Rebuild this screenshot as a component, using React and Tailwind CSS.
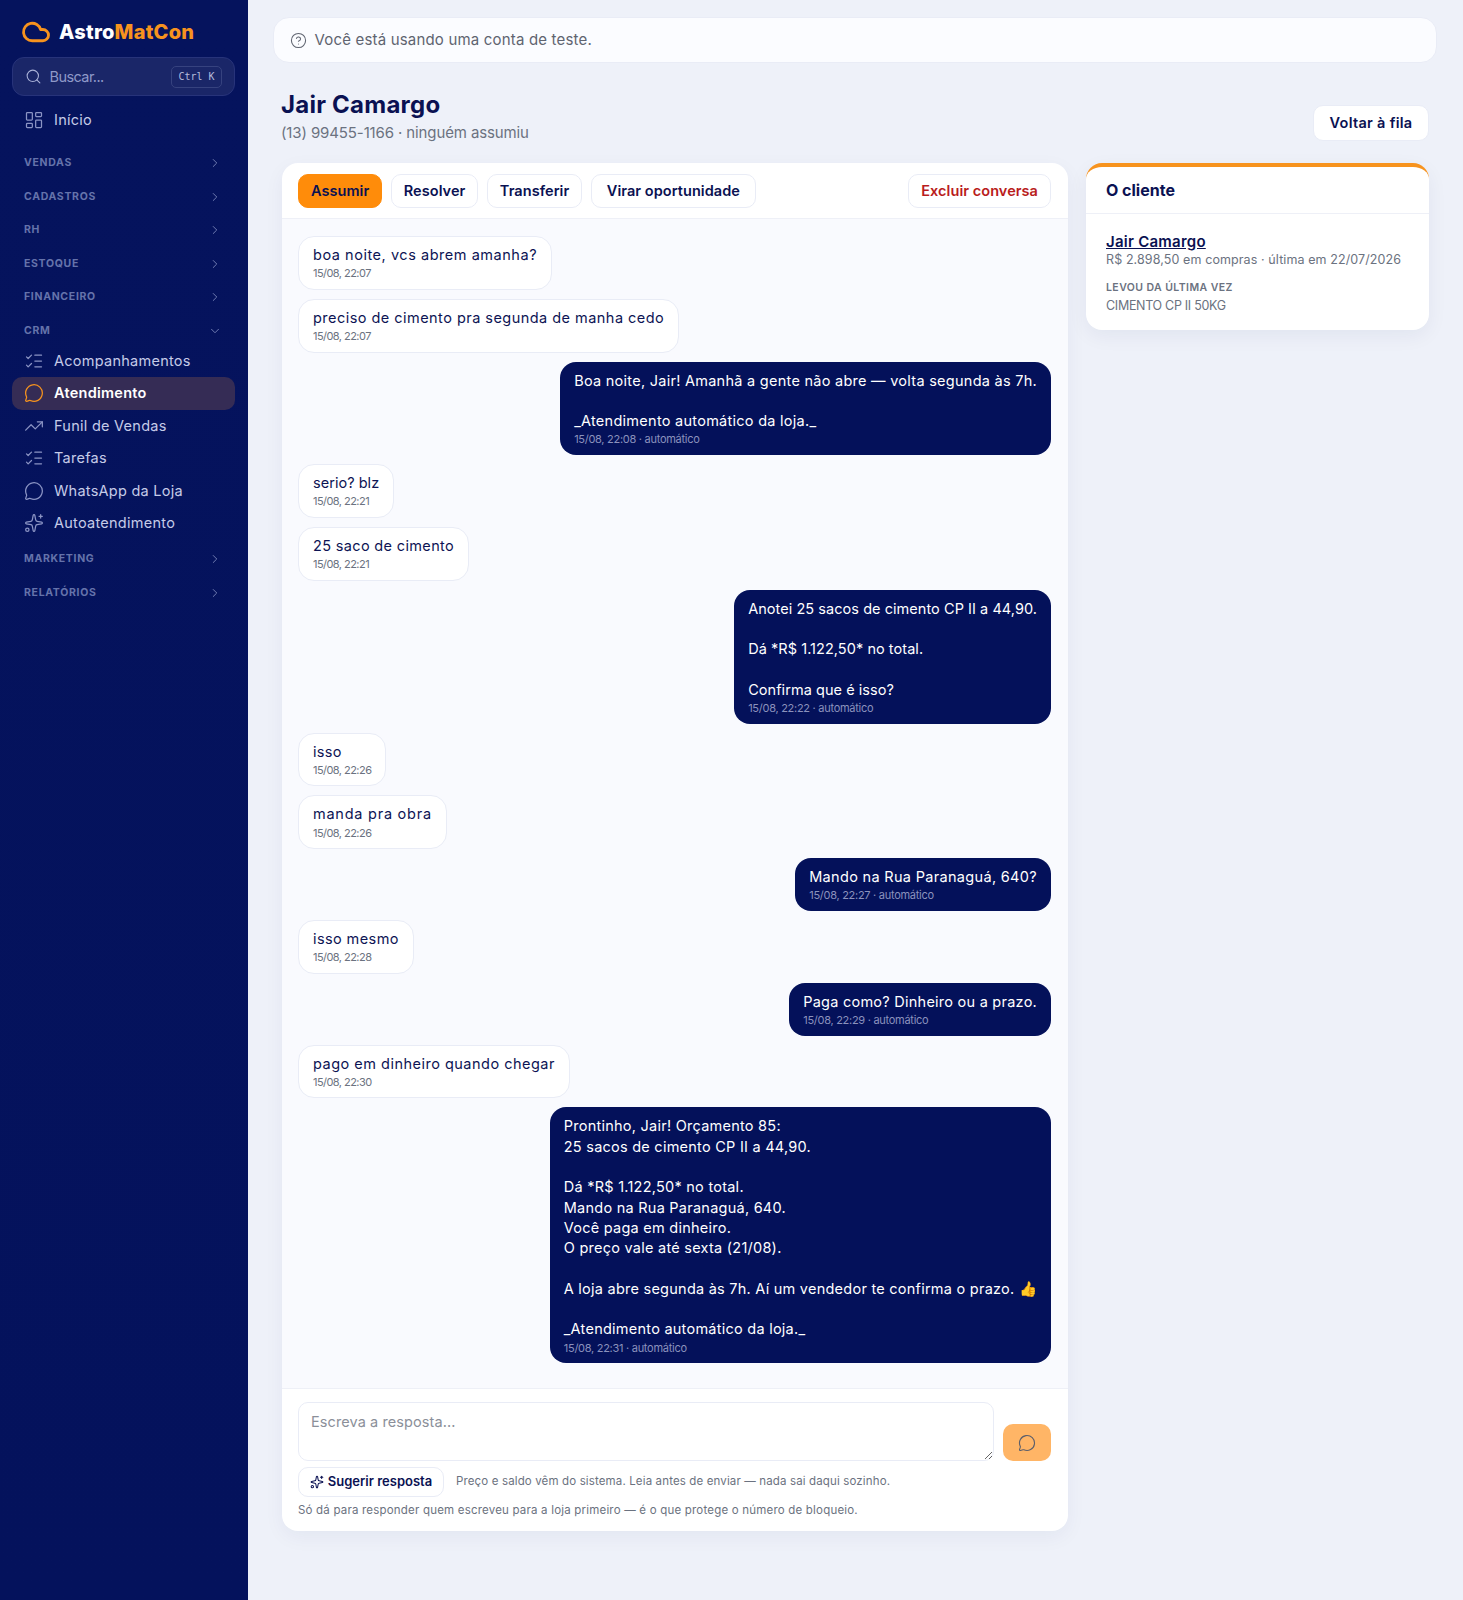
import React from "react";
import {
  ChevronDown,
  ChevronRight,
  CircleHelp,
  Cloud,
  LayoutDashboard,
  ListChecks,
  MessageCircle,
  Search,
  Sparkles,
  TrendingUp,
} from "lucide-react";

// track: letter spacing per bubble, so the bubble widths follow the reference
const messages = [
  { text: "boa noite, vcs abrem amanha?", time: "15/08, 22:07", track: "tracking-[0.037em]" },
  { text: "preciso de cimento pra segunda de manha cedo", time: "15/08, 22:07", track: "tracking-[0.032em]" },
  {
    out: true,
    text: "Boa noite, Jair! Amanhã a gente não abre — volta segunda às 7h.\n\n_Atendimento automático da loja._",
    time: "15/08, 22:08 · automático",
    track: "tracking-[0.0185em]",
  },
  { text: "serio? blz", time: "15/08, 22:21", track: "tracking-[0.002em]" },
  { text: "25 saco de cimento", time: "15/08, 22:21", track: "tracking-[0.024em]" },
  {
    out: true,
    text: "Anotei 25 sacos de cimento CP II a 44,90.\n\nDá *R$ 1.122,50* no total.\n\nConfirma que é isso?",
    time: "15/08, 22:22 · automático",
    track: "tracking-[0.0035em]",
  },
  { text: "isso", time: "15/08, 22:26", track: "tracking-[0.022em]" },
  { text: "manda pra obra", time: "15/08, 22:26", track: "tracking-[0.052em]" },
  { out: true, text: "Mando na Rua Paranaguá, 640?", time: "15/08, 22:27 · automático", track: "tracking-[0.022em]" },
  { text: "isso mesmo", time: "15/08, 22:28", track: "tracking-[0.028em]" },
  { out: true, text: "Paga como? Dinheiro ou a prazo.", time: "15/08, 22:29 · automático", track: "tracking-[0.017em]" },
  { text: "pago em dinheiro quando chegar", time: "15/08, 22:30", track: "tracking-[0.034em]" },
  {
    out: true,
    text: "Prontinho, Jair! Orçamento 85:\n25 sacos de cimento CP II a 44,90.\n\nDá *R$ 1.122,50* no total.\nMando na Rua Paranaguá, 640.\nVocê paga em dinheiro.\nO preço vale até sexta (21/08).\n\nA loja abre segunda às 7h. Aí um vendedor te confirma o prazo. 👍\n\n_Atendimento automático da loja._",
    time: "15/08, 22:31 · automático",
    track: "tracking-[0.017em]",
  },
];

const crmItems = [
  { label: "Acompanhamentos", icon: ListChecks },
  { label: "Atendimento", icon: MessageCircle, active: true },
  { label: "Funil de Vendas", icon: TrendingUp },
  { label: "Tarefas", icon: ListChecks },
  { label: "WhatsApp da Loja", icon: MessageCircle },
  { label: "Autoatendimento", icon: Sparkles },
];

function NavItem({ label, icon: Icon, active }) {
  return (
    <a
      className={`flex h-[32.5px] items-center gap-[10px] rounded-[10px] px-3 text-[14.5px] tracking-[0.018em] ${
        active ? "bg-[#352c55] font-semibold text-white" : "text-[#c5cbe8]"
      }`}
    >
      <Icon
        size={20}
        strokeWidth={1.5}
        className={`shrink-0 ${active ? "text-[#f7931e]" : "text-[#8b94c4]"}`}
      />
      {label}
    </a>
  );
}

function Section({ label, open }) {
  const Chevron = open ? ChevronDown : ChevronRight;
  return (
    <div className="flex h-[33.5px] items-center justify-between pl-3 pr-[13px] text-[10.5px] font-bold tracking-[0.065em] text-[#6573ab]">
      {label}
      <Chevron size={14} strokeWidth={1.5} className="text-[#7e89bb]" />
    </div>
  );
}

function Bubble({ out, text, time, track }) {
  if (out) {
    return (
      <div className="max-w-[80%] self-end rounded-2xl bg-[#04115a] px-[14px] pb-[7.5px] pt-[9px] text-white">
        <p className={`whitespace-pre-wrap text-[14.5px] leading-[20.3px] ${track}`}>{text}</p>
        <p className="text-[11px] leading-[16px] tracking-[-0.025em] text-[#8b92bd]">{time}</p>
      </div>
    );
  }
  return (
    <div className="max-w-[80%] self-start rounded-2xl border border-[#e9ecf6] bg-white px-[14px] pb-[7px] pt-2 text-[#0d1454]">
      <p className={`whitespace-pre-wrap text-[14.5px] leading-[20.3px] ${track}`}>{text}</p>
      <p className="text-[11px] leading-[16.5px] tracking-[-0.05em] text-[#6b7280]">{time}</p>
    </div>
  );
}

function ActionButton({ children, primary, danger, wide }) {
  const tone = primary
    ? "border-[#ff8c0a] bg-[#ff8c0a] text-[#0a1152]"
    : danger
    ? "border-[#e9ecf6] bg-white text-[#b91c1c]"
    : "border-[#e9ecf6] bg-white text-[#0a1152]";
  return (
    <button
      className={`h-[34px] rounded-[10px] border text-[14.5px] font-semibold tracking-[0.004em] ${
        wide ? "px-[15px]" : "px-3"
      } ${tone}`}
    >
      {children}
    </button>
  );
}

export default function App() {
  return (
    <div className="flex min-h-[1600px] bg-[#eef1f9] font-[Inter,sans-serif]">
      <aside className="w-[248px] shrink-0 bg-gradient-to-b from-[#05135d] to-[#04125c] pl-3 pr-[13px]">
        <div className="flex h-[57px] items-center gap-[8px] pl-[9px] pt-[6px]">
          <Cloud size={30} strokeWidth={2.25} className="text-[#f7931e]" />
          <span className="text-[20px] font-extrabold tracking-[0.012em] text-white">
            Astro<span className="text-[#f7931e]">MatCon</span>
          </span>
        </div>
        <div className="flex h-[39px] items-center gap-[8px] rounded-xl border border-[#27337a] bg-[#1a2668] pl-[11.5px] pr-[12px]">
          <Search size={17} strokeWidth={1.5} className="text-[#aab2d8]" />
          <span className="flex-1 text-[14.5px] tracking-[-0.04em] text-[#8f99c8]">Buscar...</span>
          <kbd className="flex h-[22px] w-[51px] items-center justify-center rounded-[5px] border border-[#36427f] font-['DejaVu_Sans_Mono',monospace] text-[10px] text-[#b4bbdc]">
            Ctrl K
          </kbd>
        </div>
        <div className="mt-2">
          <NavItem label="Início" icon={LayoutDashboard} />
        </div>
        <nav className="mt-[10px]">
          <Section label="VENDAS" />
          <Section label="CADASTROS" />
          <Section label="RH" />
          <Section label="ESTOQUE" />
          <Section label="FINANCEIRO" />
          <Section label="CRM" open />
          <div className="-mt-[3px]">
            {crmItems.map((item) => (
              <NavItem key={item.label} {...item} />
            ))}
          </div>
          <div className="mt-[3px]">
            <Section label="MARKETING" />
            <Section label="RELATÓRIOS" />
          </div>
        </nav>
      </aside>

      <main className="min-w-0 flex-1 pl-[25px] pr-[26px] pt-[17px]">
        <div className="flex h-[46px] items-center gap-[8px] rounded-2xl border border-[#e9ecf6] bg-[#fbfcff] px-[15.5px] text-[15px] tracking-[0.012em] text-[#5f6470]">
          <CircleHelp size={17} strokeWidth={1.5} />
          Você está usando uma conta de teste.
        </div>

        <div className="mt-[25px] flex items-start justify-between pl-2 pr-2">
          <div>
            <h1 className="text-[24px] font-bold leading-[34px] tracking-[0.01em] text-[#0a1152]">Jair Camargo</h1>
            <p className="text-[15px] leading-[21px] tracking-[-0.008em] text-[#6b7280]">
              (13) 99455-1166 · ninguém assumiu
            </p>
          </div>
          <button className="mt-[17px] h-[36px] w-[116px] rounded-[10px] border border-[#e9ecf6] bg-white text-[14.5px] font-semibold tracking-[0.02em] text-[#0a1152]">
            Voltar à fila
          </button>
        </div>

        <div className="mt-[20px] flex items-start gap-[18px] pl-[9px] pr-2">
          <section className="w-[786px] shrink-0 overflow-hidden rounded-2xl bg-white shadow-[0_6px_20px_rgba(20,30,90,0.05)]">
            <div className="flex h-[56px] items-center justify-between border-b border-[#eef0f7] pl-4 pr-[17px]">
              <div className="flex gap-[8.5px]">
                <ActionButton primary>Assumir</ActionButton>
                <ActionButton>Resolver</ActionButton>
                <ActionButton>Transferir</ActionButton>
                <ActionButton wide>Virar oportunidade</ActionButton>
              </div>
              <ActionButton danger>Excluir conversa</ActionButton>
            </div>

            <div className="flex flex-col gap-[9px] bg-[#f9fafe] pb-[25px] pl-4 pr-[17px] pt-[17px]">
              {messages.map((m, i) => (
                <Bubble key={i} {...m} />
              ))}
            </div>

            <div className="border-t border-[#eef0f7] pb-3 pl-4 pr-[17px] pt-[13px]">
              <div className="flex items-end gap-[9px]">
                <textarea
                  placeholder="Escreva a resposta..."
                  className="h-[59px] flex-1 rounded-[10px] border border-[#e9ecf6] bg-white px-3 py-2 text-[14.5px] tracking-[0.006em] outline-none placeholder:text-[#8b8f99]"
                />
                <button className="flex h-[37px] w-[48px] items-center justify-center rounded-[10px] bg-[#ffb566] text-[#5d5f6b]">
                  <MessageCircle size={18} strokeWidth={1.5} />
                </button>
              </div>
              <div className="mt-[6px] flex items-center gap-3">
                <button className="flex h-[30px] w-[146px] items-center justify-center gap-1 rounded-[10px] border border-[#e9ecf6] bg-white text-[13px] font-semibold text-[#0a1152]">
                  <Sparkles size={14} strokeWidth={1.75} />
                  Sugerir resposta
                </button>
                <span className="text-[11.5px] tracking-[0.012em] text-[#6b7280]">
                  Preço e saldo vêm do sistema. Leia antes de enviar — nada sai daqui sozinho.
                </span>
              </div>
              <p className="mt-[5px] text-[11.5px] leading-[17px] tracking-[0.017em] text-[#6b7280]">
                Só dá para responder quem escreveu para a loja primeiro — é o que protege o número de bloqueio.
              </p>
            </div>
          </section>

          <aside className="flex-1 overflow-hidden rounded-2xl border-t-4 border-[#f7931e] bg-white shadow-[0_6px_20px_rgba(20,30,90,0.06)]">
            <div className="flex h-[47px] items-center border-b border-[#eef0f7] px-5 text-[16px] font-bold text-[#0a1152]">
              O cliente
            </div>
            <div className="px-5 pb-[15.5px] pt-[18.5px]">
              <a className="block text-[15px] font-semibold leading-[18px] tracking-[0.016em] text-[#0a1152] underline">
                Jair Camargo
              </a>
              <p className="text-[12.5px] leading-[17px] tracking-[0.008em] text-[#6b7280]">
                R$ 2.898,50 em compras · última em 22/07/2026
              </p>
              <p className="mt-[12px] text-[10.5px] font-semibold leading-[16px] tracking-[0.04em] text-[#6b7280]">
                LEVOU DA ÚLTIMA VEZ
              </p>
              <p className="mt-[1px] text-[12.5px] leading-[18px] tracking-[-0.024em] text-[#6b7280]">
                CIMENTO CP II 50KG
              </p>
            </div>
          </aside>
        </div>
      </main>
    </div>
  );
}
